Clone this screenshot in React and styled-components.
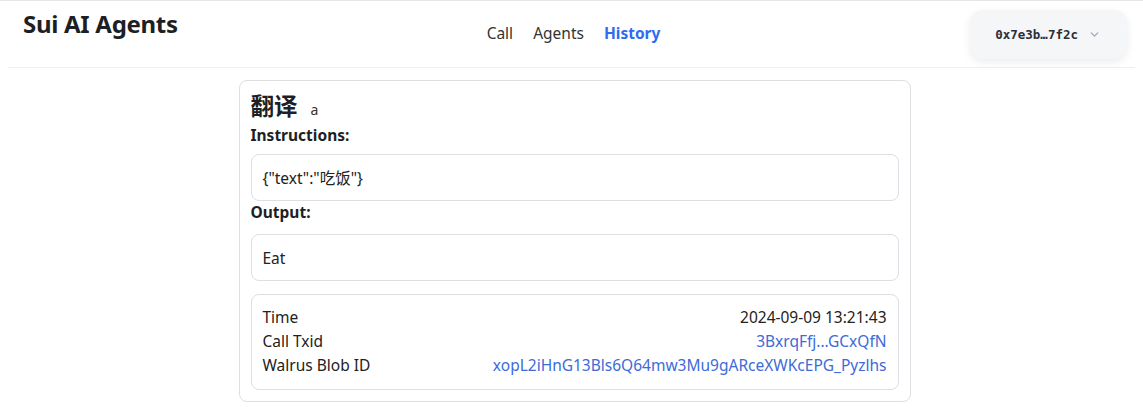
import React from "react";
import styled, {createGlobalStyle} from "styled-components";

const GlobalStyle = createGlobalStyle`
  *, *::before, *::after {
    box-sizing: border-box;
  }
  html, body {
    margin: 0;
    padding: 0;
    background: #fff;
    font-family: "Noto Sans", "Noto Sans CJK SC", sans-serif;
    color: #222;
  }
`;

const Page = styled.div`
  border-top: 1px solid #e6e6e6;
`;

const Header = styled.header`
  display: grid;
  grid-template-columns: 1fr auto 1fr;
  align-items: start;
  height: 67px;
  margin: 0 8px;
  border-bottom: 1px solid #f0f0f0;
`;

const Logo = styled.h1`
  margin: 6px 0 0 15px;
  font-size: 24px;
  font-weight: 700;
  color: #1d1f24;
  letter-spacing: -0.3px;
`;

const Nav = styled.nav`
  display: flex;
  gap: 20px;
  padding-top: 21px;
  margin-left: 4px;
`;

const NavLink = styled.a`
  font-size: 15.5px;
  font-weight: ${(p) => (p.$active ? 700 : 400)};
  color: ${(p) => (p.$active ? "#2f6bef" : "#333")};
  text-decoration: none;
  cursor: pointer;
`;

const WalletWrap = styled.div`
  display: flex;
  justify-content: flex-end;
  padding: 9px 8px 0 0;
`;

const WalletButton = styled.button`
  display: flex;
  align-items: center;
  gap: 10px;
  height: 49px;
  padding: 0 26px 0 25px;
  border: none;
  border-radius: 13px;
  background: #f5f6f8;
  box-shadow: 0 3px 8px rgba(0, 0, 0, 0.08);
  font-family: "DejaVu Sans Mono", monospace;
  font-size: 12.5px;
  font-weight: 700;
  color: #2a2f3a;
  cursor: pointer;
`;

const Main = styled.main`
  display: flex;
  justify-content: center;
  padding-top: 12px;
`;

const Card = styled.section`
  width: 672px;
  margin-left: 6px;
  padding: 11px;
  border: 1px solid #dedee3;
  border-radius: 8px;
  display: flex;
  flex-direction: column;
`;

const TitleRow = styled.div`
  display: flex;
  align-items: baseline;
  gap: 13px;
  line-height: 28px;
`;

const Title = styled.h2`
  margin: 0;
  font-size: 23.5px;
  font-weight: 700;
  color: #1d1f24;
`;

const SubTitle = styled.span`
  font-size: 14px;
  color: #333;
`;

const Label = styled.div`
  font-size: 15.5px;
  font-weight: 700;
  color: #1d1f24;
  line-height: 22px;
  margin-bottom: ${(p) => p.$mb}px;
`;

const Box = styled.div`
  border: 1px solid #dedee3;
  border-radius: 8px;
  padding: ${(p) => p.$pad || "0 11px"};
  min-height: ${(p) => p.$h || 0}px;
  display: flex;
  flex-direction: column;
  justify-content: center;
  font-size: 15.5px;
  color: #222;
  margin-bottom: ${(p) => p.$mb || 0}px;
`;

const InfoRow = styled.div`
  display: flex;
  justify-content: space-between;
  line-height: 24px;
  font-size: 15.5px;
`;

const InfoValue = styled.span`
  color: ${(p) => (p.$link ? "#3d6bd8" : "#222")};
`;

function Chevron() {
    return (
        <svg width="13" height="13" viewBox="0 0 24 24" fill="none" stroke="#a0a9b8" strokeWidth="2.5" strokeLinecap="round" strokeLinejoin="round">
            <path d="M6 9l6 6 6-6"/>
        </svg>
    );
}

export default function App() {
    return (
        <Page>
            <GlobalStyle/>
            <Header>
                <Logo>Sui AI Agents</Logo>
                <Nav>
                    <NavLink>Call</NavLink>
                    <NavLink>Agents</NavLink>
                    <NavLink $active>History</NavLink>
                </Nav>
                <WalletWrap>
                    <WalletButton>0x7e3b…7f2c <Chevron/></WalletButton>
                </WalletWrap>
            </Header>
            <Main>
                <Card>
                    <TitleRow>
                        <Title>翻译</Title>
                        <SubTitle>a</SubTitle>
                    </TitleRow>
                    <Label $mb={8}>Instructions:</Label>
                    <Box $h={47}>{'{"text":"吃饭"}'}</Box>
                    <Label $mb={11}>Output:</Label>
                    <Box $h={47} $mb={13}>Eat</Box>
                    <Box $pad="10px 11px 12px">
                        <InfoRow><span>Time</span><InfoValue>2024-09-09 13:21:43</InfoValue></InfoRow>
                        <InfoRow><span>Call Txid</span><InfoValue $link>3BxrqFfj...GCxQfN</InfoValue></InfoRow>
                        <InfoRow><span>Walrus Blob ID</span><InfoValue $link>xopL2iHnG13Bls6Q64mw3Mu9gARceXWKcEPG_Pyzlhs</InfoValue></InfoRow>
                    </Box>
                </Card>
            </Main>
        </Page>
    );
}
